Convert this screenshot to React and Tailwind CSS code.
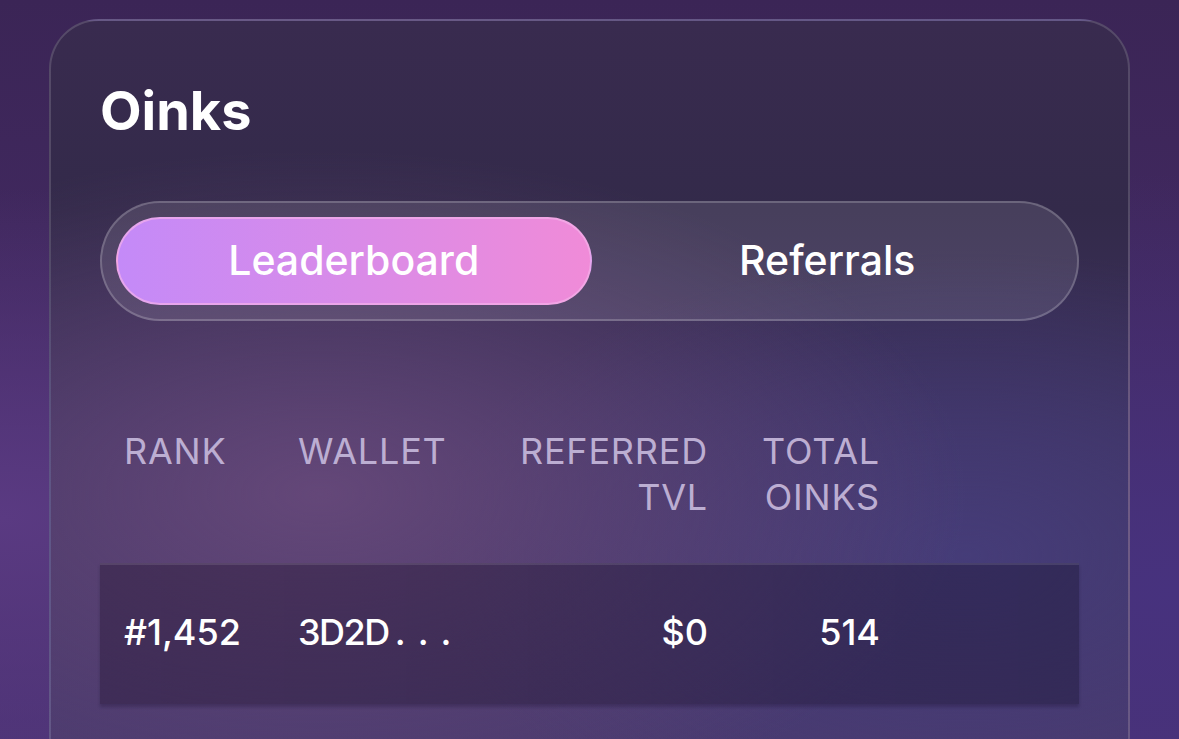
import React from "react";

export default function App() {
  return (
    <div
      className="h-[739px] w-full overflow-hidden px-[49px] pt-[19px] bg-[radial-gradient(ellipse_at_0%_70%,#5a3a82_0%,transparent_45%),radial-gradient(ellipse_at_100%_80%,#47327e_0%,transparent_50%),linear-gradient(180deg,#3b2556_0%,#432a63_50%,#4a3274_100%)]"
      style={{ fontFamily: "Inter, 'Noto Sans', sans-serif" }}
    >
      <div className="rounded-[50px] border-2 border-white/15 px-[49px] pt-[63px] pb-[80px] bg-[radial-gradient(ellipse_60%_45%_at_25%_62%,rgba(112,78,128,0.75)_0%,rgba(112,78,128,0)_100%),radial-gradient(ellipse_50%_40%_at_85%_70%,rgba(70,62,125,0.8)_0%,rgba(70,62,125,0)_100%),linear-gradient(180deg,#392b4f_0%,#332a4a_25%,#3e3260_55%,#4a3a6f_100%)]">
        <h1 className="text-[54px] leading-none font-bold text-white tracking-[0px]">
          Oinks
        </h1>

        <div className="mt-[63px] flex rounded-full border-2 border-white/20 bg-white/10 p-[14px]">
          <button className="flex h-[88px] flex-1 items-center justify-center rounded-full border-2 border-[#f4b0ea]/70 bg-[linear-gradient(90deg,#c48af8_0%,#d98be8_50%,#f08bd8_100%)] text-[41px] font-medium text-white">
            Leaderboard
          </button>
          <button className="flex h-[88px] flex-1 items-center justify-center rounded-full text-[41px] font-medium text-white">
            Referrals
          </button>
        </div>

        <div className="mt-[107px] grid grid-cols-[174px_210px_248px_172px_1fr] text-[36px] leading-[46px] tracking-[0.8px] text-[#bcaed2]">
          <div className="px-6">RANK</div>
          <div className="px-6">WALLET</div>
          <div className="px-6 text-right">
            REFERRED
            <br />
            TVL
          </div>
          <div className="px-6 text-right">
            TOTAL
            <br />
            OINKS
          </div>
          <div />
        </div>

        <div className="mt-[43px] grid h-[141px] grid-cols-[174px_210px_248px_172px_1fr] items-center border-t-2 border-white/10 bg-[linear-gradient(90deg,rgba(30,14,40,0.35)_0%,rgba(22,16,45,0.38)_100%)] pb-[6px] text-[36px] leading-[46px] font-medium text-white shadow-[0_3px_3px_rgba(20,10,40,0.25)]">
          <div className="px-6">#1,452</div>
          <div className="px-6 whitespace-nowrap">
            <span className="tracking-[-1.5px]">3D2D</span>
            <span className="ml-[6px] tracking-[12px]">...</span>
          </div>
          <div className="px-6 text-right">$0</div>
          <div className="px-6 text-right">514</div>
          <div />
        </div>
      </div>
    </div>
  );
}
